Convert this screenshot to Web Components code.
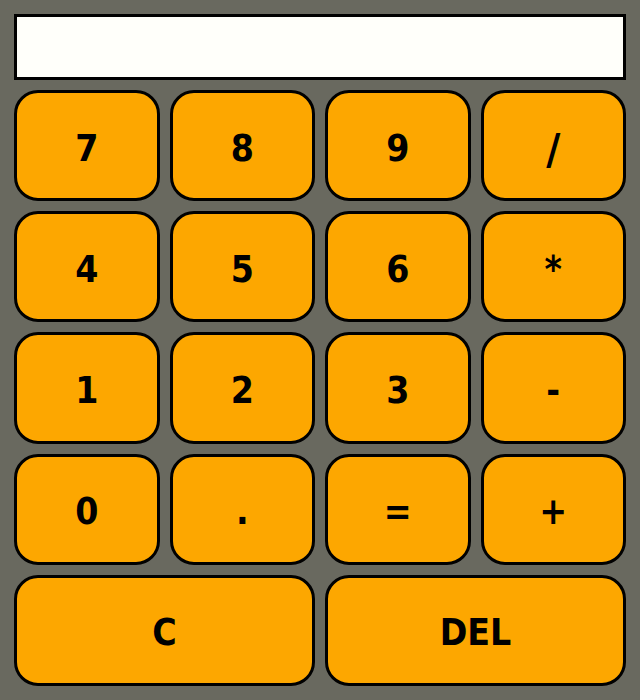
<!DOCTYPE html>
<html lang="en">
<head>
<meta charset="utf-8">
<meta name="viewport" content="width=device-width, initial-scale=1">
<title>Calculator</title>
<style>
html, body { margin: 0; }
body { background: #69695f; font-family: "DejaVu Sans Condensed", "DejaVu Sans", sans-serif; }
</style>
</head>
<body>
<calc-pad>
  <calc-display slot="display"></calc-display>
  <calc-key>7</calc-key><calc-key>8</calc-key><calc-key>9</calc-key><calc-key tall>/</calc-key>
  <calc-key>4</calc-key><calc-key>5</calc-key><calc-key>6</calc-key><calc-key>*</calc-key>
  <calc-key>1</calc-key><calc-key>2</calc-key><calc-key>3</calc-key><calc-key>-</calc-key>
  <calc-key>0</calc-key><calc-key>.</calc-key><calc-key>=</calc-key><calc-key>+</calc-key>
  <calc-key wide>C</calc-key><calc-key wide>DEL</calc-key>
</calc-pad>
<script>
class CalcDisplay extends HTMLElement {
  constructor() {
    super();
    this.attachShadow({ mode: "open" }).innerHTML = `
      <style>
        :host { display: block; }
        input {
          display: block; box-sizing: border-box; width: 100%; height: 66px;
          margin: 0; padding: 0 12px; border: 3px solid #000; border-radius: 0;
          background: #fffffa; color: #000; text-align: right; outline: none;
          font-family: inherit; font-weight: bold; font-size: 37px;
        }
      </style>
      <input type="text" aria-label="Result" readonly>`;
    this.input = this.shadowRoot.querySelector("input");
  }
  get value() { return this.input.value; }
  set value(v) { this.input.value = v; }
}

class CalcKey extends HTMLElement {
  constructor() {
    super();
    this.attachShadow({ mode: "open" }).innerHTML = `
      <style>
        :host { display: grid; }
        :host([wide]) { grid-column: span 2; }
        button {
          box-sizing: border-box; width: 100%; margin: 0; padding: 6px 0 0;
          border: 3px solid #000; border-radius: 24px;
          background: #fda700; color: #000; cursor: pointer;
          font-family: inherit; font-weight: bold;
          font-size: 37px; line-height: 44px;
        }
        :host([tall]) button { font-size: 43px; }
        button:active { background: #e09000; }
      </style>
      <button type="button"><slot></slot></button>`;
  }
}

class CalcPad extends HTMLElement {
  constructor() {
    super();
    this.attachShadow({ mode: "open" }).innerHTML = `
      <style>
        :host {
          display: flex; flex-direction: column; gap: 10px;
          box-sizing: border-box; min-height: 100vh; padding: 14px;
        }
        .keys {
          flex: 1; display: grid; gap: 10px;
          grid-template-columns: repeat(4, minmax(0, 1fr));
          grid-auto-rows: 1fr;
        }
      </style>
      <slot name="display"></slot>
      <div class="keys"><slot></slot></div>`;
    this.addEventListener("click", (event) => {
      const key = event.target.closest("calc-key");
      if (key) this.press(key.textContent.trim());
    });
  }
  press(label) {
    const display = this.querySelector("calc-display");
    if (label === "C") display.value = "";
    else if (label === "DEL") display.value = display.value.slice(0, -1);
    else if (label === "=") {
      try { display.value = String(Function("return (" + display.value + ")")()); }
      catch { display.value = "Error"; }
    } else display.value += label;
  }
}

customElements.define("calc-display", CalcDisplay);
customElements.define("calc-key", CalcKey);
customElements.define("calc-pad", CalcPad);
</script>
</body>
</html>
